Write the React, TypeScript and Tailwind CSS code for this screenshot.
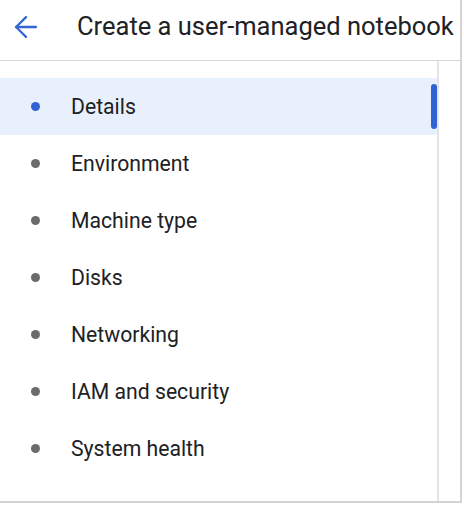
import { ArrowLeft } from "lucide-react";

const sections = [
  "Details",
  "Environment",
  "Machine type",
  "Disks",
  "Networking",
  "IAM and security",
  "System health",
];

export default function App() {
  const active = "Details";

  return (
    <div
      className="w-[462px] h-[503px] bg-white border-r-2 border-b-2 border-[#d4d4d4] flex flex-col text-[#202124]"
      style={{ fontFamily: "Roboto, 'Noto Sans', sans-serif" }}
    >
      {/* header */}
      <div className="h-[61px] shrink-0 flex items-center pb-[7px] border-b border-[#d6d6d6]">
        <button className="w-[50px] pl-[9px] text-[#3367d6]" aria-label="Back">
          <ArrowLeft size={34} strokeWidth={1.6} />
        </button>
        <h1 className="ml-[27px] text-[25.5px] leading-none whitespace-nowrap">
          Create a user-managed notebook
        </h1>
      </div>

      {/* section nav */}
      <div className="flex-1 flex min-h-0">
        <div className="w-[439px] pt-[17px] border-r-2 border-[#e4e4e4]">
          {sections.map((s) => {
            const on = s === active;
            return (
              <div
                key={s}
                className={`relative h-[57px] flex items-center ${
                  on ? "bg-[#e9f0fd]" : ""
                }`}
              >
                <span
                  className={`ml-[31px] w-[9px] h-[9px] rounded-full ${
                    on ? "bg-[#3162d4]" : "bg-[#6b6b6b]"
                  }`}
                />
                <span className="ml-[31px] pt-[1px] text-[21.2px] leading-none">{s}</span>
                {on && (
                  <span className="absolute right-0 top-[6px] w-[6px] h-[45px] rounded-full bg-[#3162d4]" />
                )}
              </div>
            );
          })}
        </div>
        <div className="flex-1" />
      </div>
    </div>
  );
}
